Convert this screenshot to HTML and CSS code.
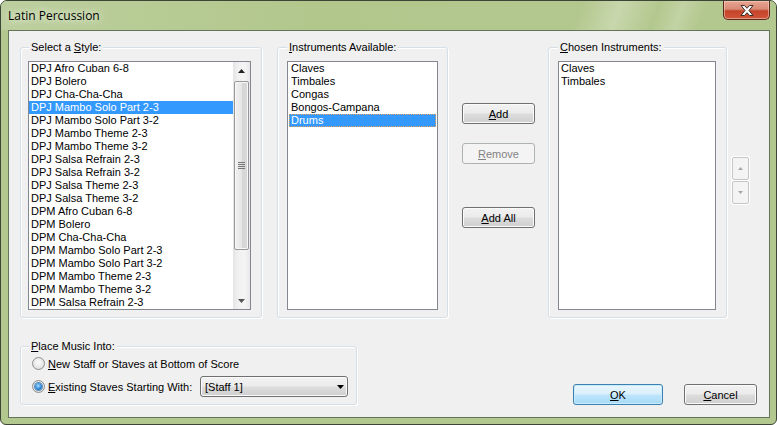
FILE: index.html
```html
<!DOCTYPE html>
<html lang="en">
<head>
  <meta charset="UTF-8">
  <title>Latin Percussion</title>
  <link rel="stylesheet" href="styles.css">
</head>
<body>
  <div class="window">
    <!-- Title bar -->
    <div class="titlebar">
      <span class="title">Latin Percussion</span>
      <div class="close-btn">
        <svg width="14" height="11" viewBox="0 0 14 11">
          <polygon points="1,0.5 4.5,0.5 7,3.3 9.5,0.5 13,0.5 9,5.5 13,10.5 9.5,10.5 7,7.7 4.5,10.5 1,10.5 5,5.5" fill="#fff" stroke="#3a2a28" stroke-width="1"/>
        </svg>
      </div>
    </div>

    <!-- Client area -->
    <div class="client">
      <div class="top-row">
        <div class="group group-style">
          <span class="legend">Select a <u>S</u>tyle:</span>
          <div class="listbox listbox-style">
            <ul class="items">
              <li>DPJ Afro Cuban 6-8</li>
              <li>DPJ Bolero</li>
              <li>DPJ Cha-Cha-Cha</li>
              <li class="selected">DPJ Mambo Solo Part 2-3</li>
              <li>DPJ Mambo Solo Part 3-2</li>
              <li>DPJ Mambo Theme 2-3</li>
              <li>DPJ Mambo Theme 3-2</li>
              <li>DPJ Salsa Refrain 2-3</li>
              <li>DPJ Salsa Refrain 3-2</li>
              <li>DPJ Salsa Theme 2-3</li>
              <li>DPJ Salsa Theme 3-2</li>
              <li>DPM Afro Cuban 6-8</li>
              <li>DPM Bolero</li>
              <li>DPM Cha-Cha-Cha</li>
              <li>DPM Mambo Solo Part 2-3</li>
              <li>DPM Mambo Solo Part 3-2</li>
              <li>DPM Mambo Theme 2-3</li>
              <li>DPM Mambo Theme 3-2</li>
              <li>DPM Salsa Refrain 2-3</li>
            </ul>
            <div class="scrollbar">
              <div class="scroll-arrow">
                <svg width="7" height="4" viewBox="0 0 7 4"><polygon points="3.5,0 7,4 0,4" fill="#222"/></svg>
              </div>
              <div class="scroll-track">
                <div class="thumb">
                  <div class="grip"><i></i><i></i><i></i><i></i></div>
                </div>
              </div>
              <div class="scroll-arrow">
                <svg width="7" height="4" viewBox="0 0 7 4"><polygon points="0,0 7,0 3.5,4" fill="#555"/></svg>
              </div>
            </div>
          </div>
        </div>

        <div class="group group-avail">
          <span class="legend"><u>I</u>nstruments Available:</span>
          <div class="listbox listbox-avail">
            <ul class="items">
              <li>Claves</li>
              <li>Timbales</li>
              <li>Congas</li>
              <li>Bongos-Campana</li>
              <li class="selected focused">Drums</li>
            </ul>
          </div>
        </div>

        <div class="move-buttons">
          <button class="btn btn-add"><u>A</u>dd</button>
          <button class="btn btn-remove" disabled><u>R</u>emove</button>
          <button class="btn btn-addall"><u>A</u>dd All</button>
        </div>

        <div class="group group-chosen">
          <span class="legend"><u>C</u>hosen Instruments:</span>
          <div class="listbox listbox-chosen">
            <ul class="items">
              <li>Claves</li>
              <li>Timbales</li>
            </ul>
          </div>
        </div>

        <div class="order-buttons">
          <div class="small-btn">
            <svg width="5" height="3" viewBox="0 0 5 3"><polygon points="2.5,0 5,3 0,3" fill="#a8a8a8"/></svg>
          </div>
          <div class="small-btn">
            <svg width="5" height="3" viewBox="0 0 5 3"><polygon points="0,0 5,0 2.5,3" fill="#a8a8a8"/></svg>
          </div>
        </div>
      </div>

      <div class="bottom-row">
        <div class="group group-place">
          <span class="legend"><u>P</u>lace Music Into:</span>
          <div class="radio-row row-new">
            <span class="radio"></span>
            <span class="radio-label"><u>N</u>ew Staff or Staves at Bottom of Score</span>
          </div>
          <div class="radio-row row-existing">
            <span class="radio checked"></span>
            <span class="radio-label label-existing"><u>E</u>xisting Staves Starting With:</span>
            <div class="combo">
              <span>[Staff 1]</span>
              <svg width="7" height="4" viewBox="0 0 7 4"><polygon points="0,0 7,0 3.5,4" fill="#000"/></svg>
            </div>
          </div>
        </div>

        <div class="dialog-buttons">
          <button class="btn btn-ok"><u>O</u>K</button>
          <button class="btn btn-cancel"><u>C</u>ancel</button>
        </div>
      </div>
    </div>
  </div>
</body>
</html>
```

FILE: styles.css
```css
/* General */
body {
  margin: 0;
  padding: 0;
  font-family: 'Liberation Sans', Arial, sans-serif;
  font-size: 11px;
  color: #000;
  background: #fff;
}

u {
  text-decoration: underline;
  text-underline-offset: 1px;
}

/* Window frame */
.window {
  box-sizing: border-box;
  width: 777px;
  height: 425px;
  border: 1px solid #3d4636;
  border-radius: 7px 7px 6px 6px;
  background: #b3c88e;
  display: flex;
  flex-direction: column;
  overflow: hidden;
}

.titlebar {
  height: 29px;
  flex: none;
  display: flex;
  align-items: center;
  justify-content: space-between;
  padding-left: 7px;
  background:
    linear-gradient(110deg, rgba(255,255,255,0) 74%, rgba(255,255,255,0.28) 79%, rgba(255,255,255,0) 84%, rgba(255,255,255,0.2) 87%, rgba(255,255,255,0) 90%),
    linear-gradient(to right, #bccf9e, #b2c78c 40%, #b3c88e);
}

.title {
  font-family: 'Open Sans', 'Liberation Sans', sans-serif;
  font-size: 12px;
  color: #000;
  margin-top: -1px;
  text-shadow: 0 0 6px #e8f0dc, 0 0 10px #e8f0dc;
}

.close-btn {
  align-self: flex-start;
  box-sizing: border-box;
  width: 47px;
  height: 19px;
  margin-right: 6px;
  border: 1px solid #5a2a20;
  border-top: none;
  border-radius: 0 0 5px 5px;
  background: linear-gradient(#e8a694 0%, #d88a74 45%, #c4442a 55%, #d0553a 100%);
  box-shadow: inset 0 0 0 1px rgba(255,220,200,0.5);
  display: flex;
  align-items: center;
  justify-content: center;
}

/* Client area */
.client {
  flex: 1;
  margin: 0 6px 6px 7px;
  border: 1px solid #65735a;
  background: #f0f0f0;
  padding: 16px 12px 12px 11px;
  display: flex;
  flex-direction: column;
}

.top-row {
  display: flex;
  align-items: flex-start;
  height: 271px;
}

.bottom-row {
  display: flex;
  align-items: flex-end;
  margin-top: 28px;
}

/* Group boxes */
.group {
  box-sizing: border-box;
  border: 1px solid #d5dfe5;
  border-radius: 3px;
  box-shadow: inset 1px 1px 0 #fff, 1px 1px 0 #fff;
  display: flex;
  flex-direction: column;
  align-items: flex-start;
}

.legend {
  display: block;
  line-height: 13px;
  height: 13px;
  margin: -7px 0 0 8px;
  padding: 0 2px;
  background: #f0f0f0;
  white-space: nowrap;
}

.group-style {
  width: 242px;
  height: 271px;
}

.group-avail {
  width: 171px;
  height: 271px;
  margin-left: 15px;
}

.group-avail .legend,
.group-chosen .legend {
  margin-left: 9px;
}

.group-chosen {
  width: 179px;
  height: 271px;
  margin-left: 13px;
}

/* List boxes */
.listbox {
  box-sizing: border-box;
  height: 249px;
  margin-top: 7px;
  border: 1px solid #828790;
  background: #fff;
  display: flex;
}

.listbox-style {
  width: 223px;
  margin-left: 7px;
}

.listbox-avail {
  width: 151px;
  margin-left: 9px;
}

.listbox-chosen {
  width: 158px;
  margin-left: 9px;
}

.items {
  list-style: none;
  margin: 0;
  padding: 0;
  flex: 1;
}

.items li {
  height: 13px;
  line-height: 13px;
  padding-left: 2px;
  white-space: nowrap;
}

.items li.selected {
  background: #3399ff;
  color: #fff;
}

.items li.focused {
  box-sizing: border-box;
  border: 1px dotted #e8a060;
  padding-left: 1px;
  line-height: 11px;
}

.listbox-avail .items {
  padding: 0 1px;
}

/* Scrollbar */
.scrollbar {
  width: 17px;
  display: flex;
  flex-direction: column;
  background: linear-gradient(to right, #e4e4e4, #f1f1f1 30%, #f4f4f4 70%, #e8e8e8);
}

.scroll-arrow {
  height: 17px;
  display: flex;
  align-items: center;
  justify-content: center;
}

.scroll-track {
  flex: 1;
  padding: 2px 0 0 1px;
}

.thumb {
  box-sizing: border-box;
  width: 15px;
  height: 169px;
  border: 1px solid #979797;
  border-radius: 2px;
  background: linear-gradient(to right, #f1f1f1, #e6e6e6 50%, #d6d6d6 51%, #d9d9d9);
  box-shadow: inset 0 0 0 1px #f8f8f8;
  display: flex;
  align-items: center;
  justify-content: center;
}

.grip {
  display: flex;
  flex-direction: column;
  gap: 1px;
  margin-top: 0;
}

.grip i {
  display: block;
  width: 7px;
  height: 1px;
  background: #777;
}

/* Buttons */
.btn {
  box-sizing: border-box;
  height: 21px;
  padding: 0;
  font-family: 'Liberation Sans', Arial, sans-serif;
  font-size: 11px;
  color: #000;
  border: 1px solid #707070;
  border-radius: 3px;
  background: linear-gradient(#f2f2f2 0%, #ebebeb 48%, #dddddd 52%, #cfcfcf 100%);
  box-shadow: inset 0 0 0 1px #fbfbfb;
}

.btn[disabled] {
  border-color: #adb2b5;
  background: #f4f4f4;
  color: #838383;
  box-shadow: none;
}

.move-buttons {
  display: flex;
  flex-direction: column;
  width: 73px;
  margin: 56px 0 0 14px;
}

.btn-add,
.btn-remove,
.btn-addall {
  width: 73px;
}

.btn-remove {
  margin-top: 19px;
}

.btn-addall {
  margin-top: 43px;
}

.order-buttons {
  display: flex;
  flex-direction: column;
  gap: 1px;
  margin: 110px 0 0 5px;
}

.small-btn {
  box-sizing: border-box;
  width: 17px;
  height: 23px;
  border: 1px solid #c6c6c6;
  border-radius: 2px;
  background: #f4f4f4;
  box-shadow: 0 0 0 1px #fff;
  display: flex;
  align-items: center;
  justify-content: center;
}

/* Place music group */
.group-place {
  width: 337px;
  height: 59px;
}

.radio-row {
  display: flex;
  align-items: center;
  margin-left: 11px;
}

.row-new {
  margin-top: 4px;
  height: 13px;
}

.row-existing {
  margin-top: 6px;
  height: 21px;
}

.radio {
  box-sizing: border-box;
  width: 13px;
  height: 13px;
  border-radius: 50%;
  border: 1px solid #8e8f8f;
  background: radial-gradient(circle at 50% 40%, #fbfbfb 0%, #e8e8e8 55%, #cfcfcf 100%);
  display: flex;
  align-items: center;
  justify-content: center;
}

.radio.checked::after {
  content: '';
  width: 7px;
  height: 7px;
  border-radius: 50%;
  background: radial-gradient(circle at 45% 40%, #a9e0ff 0%, #2f86d6 55%, #124f8f 100%);
  box-shadow: 0 0 0 1px #5b8fba;
}

.radio-label {
  margin-left: 3px;
  white-space: nowrap;
}

.label-existing {
  width: 152px;
}

.combo {
  box-sizing: border-box;
  width: 148px;
  height: 21px;
  border: 1px solid #707070;
  border-radius: 3px;
  background: linear-gradient(#f2f2f2 0%, #ebebeb 48%, #dddddd 52%, #cfcfcf 100%);
  box-shadow: inset 0 0 0 1px #fbfbfb;
  display: flex;
  align-items: center;
  justify-content: space-between;
  padding: 0 3px 0 4px;
}

/* OK / Cancel */
.dialog-buttons {
  display: flex;
  margin-left: auto;
}

.btn-ok {
  width: 90px;
  border-color: #3c7fb1;
  background: linear-gradient(#eaf6fd 0%, #d9f0fc 48%, #bee6fd 52%, #a7d9f5 100%);
  box-shadow: inset 0 0 0 1px #c9ecfd;
}

.btn-cancel {
  width: 73px;
  margin-left: 21px;
}
```
